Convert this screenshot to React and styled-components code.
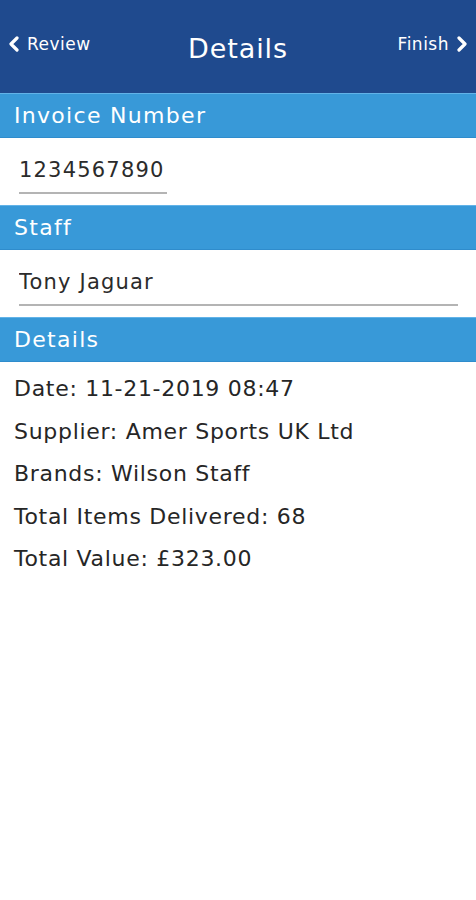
import styled, { createGlobalStyle } from "styled-components";

const GlobalStyle = createGlobalStyle`
  body {
    margin: 0;
    background: #ffffff;
    font-family: "DejaVu Sans", "Noto Sans", sans-serif;
  }
`;

const Chevron = ({ dir }) => (
  <svg width="12" height="16" viewBox="0 0 12 16">
    <path
      d={dir === "left" ? "M9 2 L3 8 L9 14" : "M3 2 L9 8 L3 14"}
      fill="none"
      stroke="#ffffff"
      strokeWidth="3.2"
      strokeLinecap="round"
      strokeLinejoin="round"
    />
  </svg>
);

const App = () => {
  return (
    <Page>
      <GlobalStyle />
      <TopBar>
        <NavButton>
          <Chevron dir="left" />
          <span>Review</span>
        </NavButton>
        <Title>Details</Title>
        <NavButton $right>
          <span>Finish</span>
          <Chevron dir="right" />
        </NavButton>
      </TopBar>

      <SectionHeader>Invoice Number</SectionHeader>
      <Field>
        <Input defaultValue="1234567890" $width="148px" />
      </Field>

      <SectionHeader>Staff</SectionHeader>
      <Field>
        <Input defaultValue="Tony Jaguar" />
      </Field>

      <SectionHeader>Details</SectionHeader>
      <DetailList>
        <DetailRow>Date: 11-21-2019 08:47</DetailRow>
        <DetailRow>Supplier: Amer Sports UK Ltd</DetailRow>
        <DetailRow>Brands: Wilson Staff</DetailRow>
        <DetailRow>Total Items Delivered: 68</DetailRow>
        <DetailRow>Total Value: £323.00</DetailRow>
      </DetailList>
    </Page>
  );
};

const Page = styled.div`
  width: 476px;
  min-height: 900px;
  background: #ffffff;
`;

const TopBar = styled.div`
  height: 93px;
  background-color: #1f4a8e;
  display: grid;
  grid-template-columns: 1fr auto 1fr;
  align-items: center;
  padding: 0 8px;
  box-sizing: border-box;
  color: #ffffff;
`;

const NavButton = styled.div`
  display: flex;
  align-items: center;
  gap: 7px;
  justify-self: ${(p) => (p.$right ? "end" : "start")};
  margin-top: -5px;
  font-size: 17px;
  letter-spacing: 0.5px;

  svg {
    flex-shrink: 0;
  }
`;

const Title = styled.h1`
  margin: 4px 0 0;
  font-size: 27px;
  font-weight: 400;
  letter-spacing: 0.9px;
`;

const SectionHeader = styled.div`
  height: 45px;
  box-sizing: border-box;
  background-color: #3899d8;
  border-top: 1px solid #62b3e8;
  border-bottom: 1px solid #2f8ccc;
  color: #ffffff;
  font-size: 22px;
  letter-spacing: 1.3px;
  padding: 0 14px;
  display: flex;
  align-items: center;
`;

const Field = styled.div`
  height: 67px;
  box-sizing: border-box;
  padding: 16px 18px 0 19px;
`;

const Input = styled.input`
  display: block;
  width: ${(p) => p.$width || "100%"};
  box-sizing: border-box;
  border: 0;
  border-bottom: 2px solid #b4b4b4;
  outline: none;
  background: transparent;
  padding: 0 0 6px 0;
  font-family: inherit;
  font-size: 21px;
  letter-spacing: 1.2px;
  color: #2b2b2b;
  height: 40px;
`;

const DetailList = styled.div`
  padding: 6px 14px 0;
  display: flex;
  flex-direction: column;
`;

const DetailRow = styled.div`
  line-height: 42.5px;
  font-size: 22px;
  letter-spacing: 0.7px;
  color: #262626;
`;

export default App;
